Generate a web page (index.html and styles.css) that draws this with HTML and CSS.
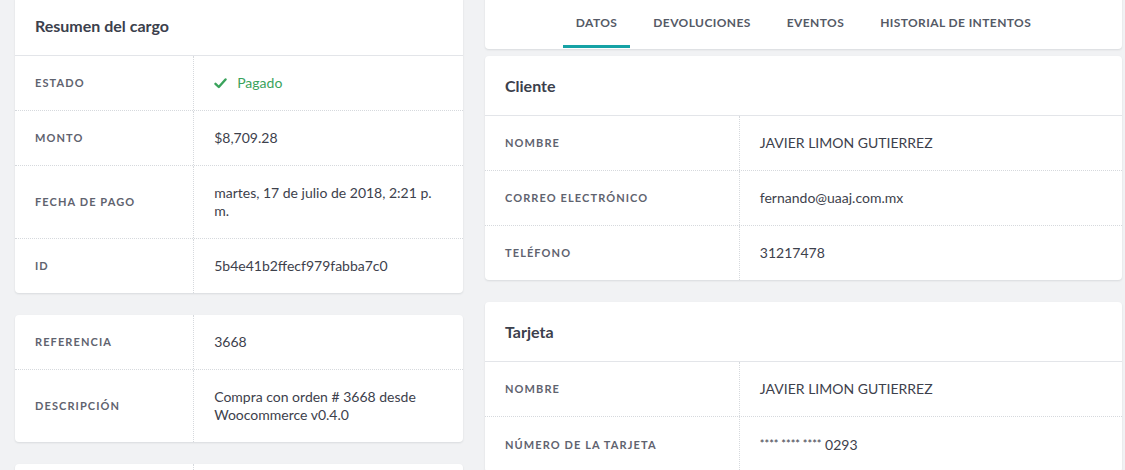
FILE: index.html
```html
<!DOCTYPE html>
<html lang="es">
<head>
<meta charset="utf-8">
<title>Resumen del cargo</title>
<link rel="stylesheet" href="styles.css">
</head>
<body>
<div class="page">
  <div class="col">
    <section class="card">
      <header class="card-head"><h2>Resumen del cargo</h2></header>
      <div class="row"><div class="lbl">Estado</div><div class="val paid"><svg class="check" width="13" height="11" viewBox="0 0 13 11"><path d="M1.5 5.8 L4.8 9 L11.5 1.5" fill="none" stroke="#3aa35c" stroke-width="2.4" stroke-linecap="round" stroke-linejoin="round"/></svg>Pagado</div></div>
      <div class="row"><div class="lbl">Monto</div><div class="val">$8,709.28</div></div>
      <div class="row"><div class="lbl">Fecha de pago</div><div class="val">martes, 17 de julio de 2018, 2:21 p. m.</div></div>
      <div class="row"><div class="lbl">ID</div><div class="val">5b4e41b2ffecf979fabba7c0</div></div>
    </section>
    <section class="card">
      <div class="row"><div class="lbl">Referencia</div><div class="val">3668</div></div>
      <div class="row"><div class="lbl">Descripción</div><div class="val">Compra con orden # 3668 desde Woocommerce v0.4.0</div></div>
    </section>
    <section class="card">
      <div class="row"><div class="lbl empty"></div><div class="val empty"></div></div>
    </section>
  </div>
  <div class="col">
    <nav class="card tabs">
      <a class="tab active">Datos</a>
      <a class="tab">Devoluciones</a>
      <a class="tab">Eventos</a>
      <a class="tab">Historial de intentos</a>
    </nav>
    <section class="card first">
      <header class="card-head"><h2>Cliente</h2></header>
      <div class="row"><div class="lbl">Nombre</div><div class="val">JAVIER LIMON GUTIERREZ</div></div>
      <div class="row"><div class="lbl">Correo electrónico</div><div class="val">fernando@uaaj.com.mx</div></div>
      <div class="row"><div class="lbl">Teléfono</div><div class="val">31217478</div></div>
    </section>
    <section class="card">
      <header class="card-head"><h2>Tarjeta</h2></header>
      <div class="row"><div class="lbl">Nombre</div><div class="val">JAVIER LIMON GUTIERREZ</div></div>
      <div class="row"><div class="lbl">Número de la tarjeta</div><div class="val"><span class="stars">**** **** ****</span> 0293</div></div>
    </section>
  </div>
</div>
</body>
</html>
```
FILE: styles.css
```css
html, body {
  margin: 0;
  padding: 0;
  background: #f1f2f4;
  font-family: Lato, "Open Sans", sans-serif;
  overflow: hidden;
  height: 470px;
}
.page {
  display: grid;
  grid-template-columns: 448px 637px;
  column-gap: 22px;
  padding-left: 15px;
  margin-top: -4px;
}
.col {
  display: flex;
  flex-direction: column;
  gap: 22px;
}
.card {
  background: #fff;
  border-radius: 4px;
  box-shadow: 0 1px 2px rgba(40, 48, 60, 0.12);
}
.card.first { margin-top: -15px; }
.card-head {
  height: 59px;
  display: flex;
  align-items: center;
  padding: 0 20px;
  border-bottom: 1px solid #e3e5e9;
}
.card-head h2 {
  margin: 0;
  font-size: 16px;
  font-weight: 700;
  color: #3b404c;
}
.row {
  display: grid;
  grid-template-columns: 40% 60%;
  border-top: 1px dotted #d6d9dd;
}
.card-head + .row, .card > .row:first-child { border-top: none; }
.lbl {
  padding: 18px 20px;
  font-size: 11px;
  font-weight: 700;
  letter-spacing: 1.1px;
  text-transform: uppercase;
  color: #5f636f;
  line-height: 18px;
  display: flex;
  align-items: center;
  border-right: 1px dotted #d6d9dd;
}
.val {
  padding: 18px 20px 18px 20px;
  font-size: 14px;
  line-height: 18px;
  color: #3d414c;
}
.empty { min-height: 18px; }
.val.paid {
  color: #3aa35c;
  display: flex;
  align-items: center;
}
.check { margin-right: 10px; }
.stars { font-size: 11px; vertical-align: 2px; }
.tabs {
  height: 53px;
  display: flex;
  justify-content: center;
  gap: 10px;
  border-radius: 0 0 4px 4px;
}
.tab {
  box-sizing: border-box;
  height: 52px;
  padding: 19px 13px 0;
  font-size: 12px;
  line-height: 16px;
  font-weight: 700;
  letter-spacing: 0.4px;
  text-transform: uppercase;
  color: #555a66;
  border-bottom: 3px solid transparent;
}
.tab.active { border-bottom-color: #16a2a5; }
```
